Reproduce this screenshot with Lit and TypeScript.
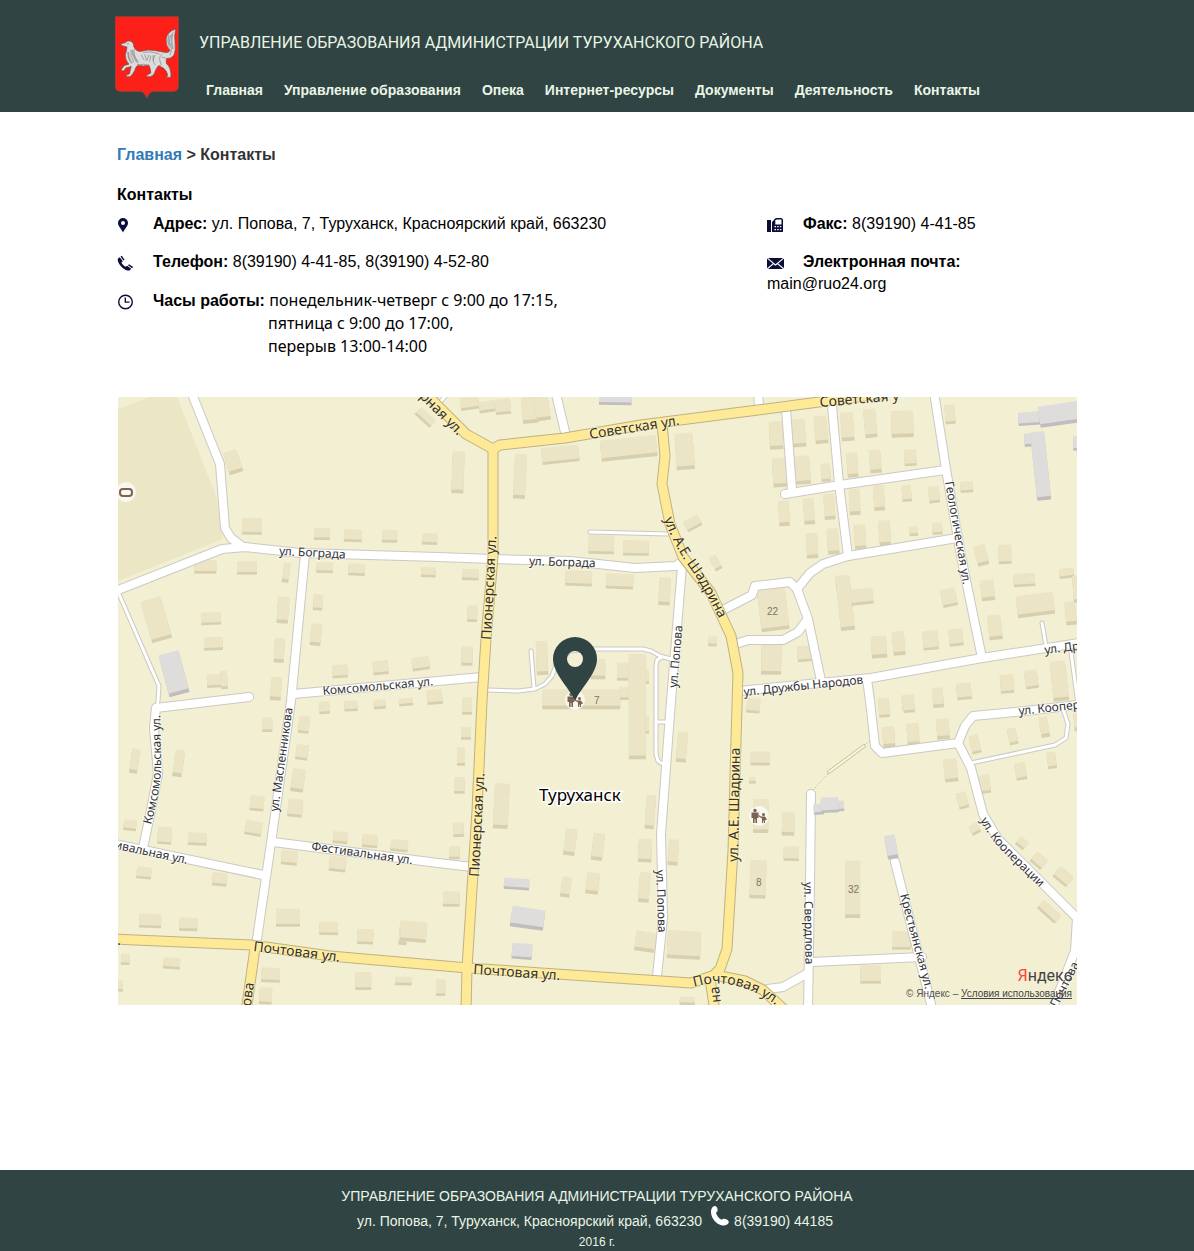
import { LitElement, html, svg, css } from "lit";
import { customElement } from "lit/decorators.js";

type Road = [kind: "main" | "street" | "lane", points: string];
type Box = [cx: number, cy: number, w: number, h: number, angle?: number];
interface Tile {
  x: number;
  y: number;
  houses: Box[];
  halls: Box[];
}

const ROADS: Road[] = [
  ["lane", "119,594 159,686 158,701 156,710"],
  ["lane", "590,532 668,534"],
  ["lane", "488,690 518,691 535,689 545,684 552,676 556,665 570,651 590,649 643,649 651,651 660,656 671,659"],
  ["lane", "531,651 534,688"],
  ["lane", "662,657 657,660 656,666 656,754 658,761 663,764"],
  ["lane", "656,722 668,722"],
  ["lane", "971,763 1055,745 1066,738 1068,724 1063,709"],
  ["lane", "1042,623 1046,646"],
  ["lane", "1071,651 1078,705"],
  ["lane", "447,394 437,406"],
  ["street", "192,394 220,464 225,528 231,538 243,547"],
  ["street", "110,593 118,590 222,549 245,547 300,553 438,557 493,559 570,561 635,568 676,566 685,559"],
  ["street", "305,554 291,701 271,843 256,946"],
  ["street", "293,694 438,681 482,677"],
  ["street", "249,697 156,708 154,728 158,774 150,815 143,848"],
  ["street", "110,843 263,875"],
  ["street", "273,842 438,863 472,867"],
  ["street", "682,566 671,701 661,834 663,918 657,976"],
  ["street", "556,394 566,436"],
  ["street", "758,390 759,408"],
  ["street", "721,611 752,595 755,586 790,582 797,589 808,619 821,681"],
  ["street", "797,589 810,573 823,564 848,556 891,549 957,538"],
  ["street", "736,644 748,640 783,640 798,632 807,620"],
  ["street", "934,392 946,469 961,556 982,658"],
  ["street", "785,494 840,485 945,470"],
  ["street", "786,409 792,490"],
  ["street", "832,406 839,484 848,556"],
  ["street", "741,691 758,689 871,678 982,658 1085,642"],
  ["street", "867,679 870,701 875,746 882,753 958,743 965,726 973,716 1025,711 1085,704"],
  ["street", "958,743 971,768 983,814 998,839 1077,918 1075,951 1050,1015"],
  ["street", "811,794 810,884 808,1012"],
  ["street", "811,962 922,957"],
  ["street", "808,973 783,987 768,989"],
  ["street", "895,862 915,941 933,1012"],
  ["main", "110,939 251,945 330,956 468,968 691,983 715,975 745,981 763,990 790,1015"],
  ["main", "255,948 246,1012"],
  ["main", "493,449 493,556 486,639 482,701 477,811 467,968 466,1012"],
  ["main", "418,385 438,406 466,434 493,449 500,445 565,438 641,425 758,410 880,394"],
  ["main", "662,424 665,456 662,484 670,524 683,557 711,593 731,636 738,673 736,740 733,851 727,949 720,969 710,979 715,1012"],
];

const TILES: Tile[] = [
  {
    x: 118, y: 396,
    houses: [
      [345,198,42,70,-18],[402,391,60,50,1],[612,414,48,36,0],[705,419,54,38,2],[815,421,45,38,1],[935,429,46,34,2],
      [262,513,66,40,0],[387,516,60,40,0],[505,530,20,60,8],[620,515,50,32,1],[716,521,50,36,2],[931,529,44,30,2],
      [115,671,62,130,-16],[495,642,34,80,4],[600,619,28,48,4],[594,716,32,66,6],[279,668,60,38,-2],[286,743,56,40,-2],
      [484,763,30,74,3],[290,855,46,40,-2],[318,852,20,54,-4],[474,878,32,70,4],[666,826,46,40,-3],[788,815,46,42,-5],
      [908,803,52,40,-8],[922,64,60,30,42],
    ],
    halls: [[168,833,62,130,-15]],
  },
  {
    x: 438, y: 396,
    houses: [
      [95,22,56,38,-8],[147,32,48,34,-8],[195,32,46,46,-5],[275,42,46,80,-5],[312,30,42,88,-8],[60,229,36,126,2],
      [246,241,36,134,3],[367,176,112,50,-6],[572,157,168,64,-6],[740,166,54,110,-4],[764,382,48,36,-28],[833,501,22,46,-28],
      [490,446,76,56,1],[594,456,77,46,1],[422,547,80,46,2],[545,556,82,46,2],[680,586,34,84,3],[97,536,50,34,2],
      [103,653,30,50,3],[87,780,34,58,1],[312,786,34,102,-2],[824,736,25,30,2],[480,820,44,60,0],[554,827,34,54,0],
      [628,842,10,44,0],[575,892,60,40,0],[430,910,234,60,0],[598,932,51,316,0],
    ],
    halls: [[532,12,98,30,1]],
  },
  {
    x: 758, y: 396,
    houses: [
      [54,118,40,84,-3],[122,111,40,84,-4],[189,101,38,84,-5],[268,92,38,86,-4],[337,82,36,86,-5],[433,84,66,80,-2],
      [576,55,30,58,-5],[66,230,44,86,-4],[134,222,44,86,-4],[203,230,28,54,-4],[283,207,32,74,-4],[352,196,34,70,-5],
      [457,185,36,50,-3],[626,273,38,34,-4],[78,352,32,76,-3],[153,346,32,78,-4],[214,332,32,78,-4],[290,318,32,78,-3],
      [363,306,32,76,-4],[446,292,28,50,-5],[528,296,32,50,-5],[162,449,34,76,-3],[225,436,34,78,-4],[306,423,34,74,-4],
      [380,411,34,76,-4],[467,406,26,28,-4],[538,398,30,36,-5],[45,638,84,132,-7],[40,782,60,108,1],[140,773,44,48,-4],
      [254,560,42,44,-4],[262,625,42,156,-6],[312,602,66,48,-6],[573,605,44,54,-12],[670,478,34,62,-14],[741,475,38,58,-2],
      [799,552,64,40,-3],[832,627,112,66,-7],[689,583,40,62,-6],[711,694,40,74,-6],[926,532,44,30,-6],[938,652,32,70,-5],
      [518,733,46,58,-5],[594,724,42,52,-6],[363,753,46,66,-4],[422,742,36,72,-5],[904,855,46,120,-6],[747,864,40,56,-5],
      [820,850,38,56,-8],[618,886,44,50,-5],[540,905,32,60,-4],[450,920,36,44,-4],[956,580,22,80,-4],
    ],
    halls: [[813,68,64,40,-4],[905,55,124,64,-8],[812,132,26,40,-5],[848,210,42,206,-6],[955,142,18,44,0]],
  },
  {
    x: 118, y: 701,
    houses: [
      [50,180,24,74,8],[182,187,28,80,8],[448,71,30,44,0],[558,71,32,52,6],[552,154,36,46,8],[540,238,38,70,8],
      [532,321,44,54,6],[417,307,42,46,5],[407,382,50,44,10],[36,373,38,32,6],[140,404,42,52,4],[238,414,56,38,2],
      [78,516,44,36,5],[305,535,44,40,6],[514,470,48,44,5],[659,489,50,46,6],[667,410,44,36,5],[756,420,46,40,5],
      [844,434,52,36,5],[97,660,66,42,2],[211,670,54,40,2],[510,650,72,54,0],[632,682,56,40,1],[742,707,48,46,2],
      [856,696,24,72,5],[887,692,78,62,5],[22,775,26,34,2],[161,787,50,34,4],[458,822,56,44,2],[443,885,38,50,3],
      [736,840,48,54,0],[856,840,50,26,1],[5,855,20,34,3],[619,20,32,38,-4],[699,15,40,32,-2],[785,10,36,28,-5],
      [864,3,42,24,-5],[950,-12,46,44,-5],[968,860,28,50,0],
    ],
    halls: [],
  },
  {
    x: 438, y: 701,
    houses: [
      [87,15,30,52,0],[84,97,30,38,0],[69,166,24,56,0],[64,253,32,50,0],[61,386,32,44,-3],[49,455,32,40,0],
      [40,594,50,46,1],[190,315,44,136,3],[397,423,34,80,8],[480,437,34,82,7],[384,558,28,62,8],[464,547,38,64,7],
      [637,333,28,102,4],[621,449,40,70,2],[706,454,30,78,4],[619,559,32,90,4],[732,138,30,92,5],[628,71,10,54,0],
      [622,722,60,60,8],[738,732,100,84,3],[748,900,46,24,1],[943,238,20,20,0],[946,14,40,44,5],
    ],
    halls: [[236,549,76,34,4],[269,652,100,62,8],[252,751,60,48,4]],
  },
  {
    x: 758, y: 701,
    houses: [
      [378,20,32,58,-4],[452,8,34,54,-4],[543,5,28,24,-5],[392,108,36,62,-4],[465,100,36,66,-4],[555,84,38,62,-4],
      [651,130,28,56,-14],[764,106,26,50,-12],[859,78,26,62,-10],[881,178,26,50,-8],[788,211,32,52,-10],[681,249,30,56,-8],
      [578,208,40,70,-6],[613,298,30,50,-16],[650,384,28,32,-28],[792,427,30,30,40],[843,479,42,38,40],[916,527,52,40,40],
      [874,632,70,34,42],[91,369,38,70,2],[100,458,46,44,1],[7,172,58,42,1],[8,345,46,102,0],[0,535,48,116,2],
      [284,565,45,172,0],[430,718,56,56,0],[338,820,62,56,0],[956,45,20,90,-5],
    ],
    halls: [[182,325,30,32,-5],[245,315,26,32,-3],[215,312,52,46,-3],[400,438,32,72,-10]],
  },
];

type Label = [text: string, x: number, y: number, angle: number, cls?: string];
const LABELS: Label[] = [
  ["ул. Бограда", 279, 555, 3],
  ["ул. Бограда", 529, 565, 2],
  ["Советская ул.", 590, 439, -9, "big"],
  ["Советская у", 820, 407, -5, "big"],
  ["Пионерская ул.", 491, 640, -87, "big"],
  ["Пионерская ул.", 479, 877, -87, "big"],
  ["ул. Попова", 677, 688, -85],
  ["ул. Попова", 656, 870, 88],
  ["ул. А.Е. Шадрина", 738, 862, -89, "big"],
  ["ул. Дружбы Народов", 744, 696, -6],
  ["Геологическая ул.", 945, 482, 80],
  ["ул. Др", 1045, 654, -7],
  ["ул. Коопер", 1019, 715, -6],
  ["ул. Свердлова", 804, 882, 89],
  ["Крестьянская ул.", 900, 895, 75],
  ["ул. Масленникова", 278, 812, -82],
  ["Комсомольская ул.", 323, 695, -5],
  ["Фестивальная ул.", 311, 850, 8],
  ["ивальная ул.", 187, 864, 12, "end"],
  ["Почтовая ул.", 253, 951, 7, "big"],
  [".", 121, 945, 2, "big end"],
  ["Почтовая ул.", 473, 974, 4, "big"],
  ["ова", 254, 983, -82, "big end"],
  ["на", 719, 986, -96, "big end"],
  ["рная ул.", 458, 436, 45, "big end"],
  ["Почтова", 1057, 1008, -63],
];

const CURVED: [id: string, d: string, text: string, cls: string][] = [
  ["c1", "M664 519 Q675 548 690 568 T732 646", "ул. А.Е. Шадрина", "big"],
  ["c2", "M694 987 Q738 974 782 1010", "Почтовая ул.", "big"],
  ["c3", "M980 820 Q989 838 1005 854 L1061 908", "ул. Кооперации", ""],
  ["c4", "M151 825 Q162 785 161 760 L160 700", "Комсомольская ул.", ""],
];

const NUMBERS: [string, number, number][] = [["22", 767, 615], ["7", 594, 704], ["8", 756, 886], ["32", 848, 893]];

const NAV = ["Главная", "Управление образования", "Опека", "Интернет-ресурсы", "Документы", "Деятельность", "Контакты"];

const roadLayer = (kind: string, part: string) =>
  ROADS.filter((r) => r[0] === kind).map((r) => svg`<polyline class="${kind} ${part}" points=${r[1]}></polyline>`);

const block = (b: Box, kind: string) => {
  const [cx, cy, w, h, a = 0] = b;
  const depth = h > 58 ? 11 : 8;
  const t = `rotate(${a} ${cx} ${cy})`;
  return svg`
    <rect class="${kind}-side" x=${cx - w / 2} y=${cy - h / 2 + depth} width=${w} height=${h - depth} transform=${t}></rect>
    <rect class=${kind} x=${cx - w / 2} y=${cy - h / 2} width=${w} height=${h - depth} transform=${t}></rect>`;
};

const family = (x: number, y: number) => svg`
  <g transform="translate(${x} ${y})">
    <circle class="poi-bg" r="10"></circle>
    <g class="poi">
      <circle cx="-4" cy="-5.500" r="1.700"></circle>
      <path d="M-7.500-3.500h7V2H-2v5h-1.600V3h-.8v4H-6V2h-1.500z"></path>
      <circle cx="4.500" cy="-1.500" r="1.500"></circle>
      <path d="M0-1l2 1.500h4l2 3-1 .8L6 3.500V7H4.900V4.800h-.8V7H3V2.500L-.5.200z"></path>
    </g>
  </g>`;

@customElement("town-map")
class TownMap extends LitElement {
  static styles = css`
    :host { display: block; position: relative; overflow: hidden; background: #f3efd3; }
    .canvas { display: block; width: 100%; height: auto; }
    .park { fill: #ebe7c4; }
    .house { fill: #ebe4c5; }
    .house-side { fill: #d6d0b1; }
    .hall { fill: #dfdddc; }
    .hall-side { fill: #bfbdbe; }
    polyline { fill: none; stroke-linejoin: round; stroke-linecap: round; }
    .edge { stroke: #cbc9c4; }
    .street.edge { stroke-width: 10px; }
    .lane.edge { stroke-width: 5px; }
    .main.edge { stroke: #bdb284; stroke-width: 11px; }
    .street.fill { stroke: #fff; stroke-width: 8px; }
    .lane.fill { stroke: #fff; stroke-width: 3px; }
    .main.fill { stroke: #feea96; stroke-width: 9px; }
    .trail-edge { stroke: #c9c7b4; stroke-width: 4px; }
    .trail { stroke: #fbf9c8; stroke-width: 2px; }
    .dots { stroke: #a9b87c; stroke-width: 1px; stroke-linecap: butt; stroke-dasharray: 1 2; }
    .label {
      font-family: "Noto Sans", "Open Sans", sans-serif; font-size: 12px; fill: #333;
      paint-order: stroke; stroke: rgba(255, 255, 255, 0.55); stroke-width: 2px;
    }
    .big { font-size: 14px; stroke: rgba(255, 245, 200, 0.55); }
    .end { text-anchor: end; }
    .town { font-size: 17px; fill: #000; stroke: #fff; stroke-width: 3px; }
    .number { font-family: "Liberation Sans", sans-serif; font-size: 10px; fill: #7a7668; }
    .poi-bg { fill: #faf7ee; }
    .poi { fill: #7a6353; }
    .stadium { fill: none; stroke: #7a6353; stroke-width: 2px; }
    .pin { fill: #2f4443; fill-rule: evenodd; }
    .credits { position: absolute; right: 5px; bottom: 5px; display: flex; flex-direction: column; align-items: flex-end; }
    .logo { font: 16px/24px Roboto, "Liberation Sans", sans-serif; color: #444; text-decoration: none; }
    .logo-first { color: #f43; }
    .terms { font: 10px/12px "Liberation Sans", Arial, sans-serif; color: #555; }
    .terms-link { color: #444; }
  `;

  render() {
    return html`
      <svg class="canvas" viewBox="118 397 959 608" role="img" aria-label="Туруханск">
        <polygon class="park" points="118,409 150,397 177,397 216,496 223,539 118,581"></polygon>
        ${TILES.map((t) => svg`<g transform="translate(${t.x} ${t.y}) scale(0.3333)">
          ${t.houses.map((b) => block(b, "house"))}
        </g>`)}
        ${roadLayer("lane", "edge")} ${roadLayer("street", "edge")}
        ${roadLayer("lane", "fill")} ${roadLayer("street", "fill")}
        ${roadLayer("main", "edge")} ${roadLayer("main", "fill")}
        ${TILES.map((t) => svg`<g transform="translate(${t.x} ${t.y}) scale(0.3333)">
          ${t.halls.map((b) => block(b, "hall"))}
        </g>`)}
        <polyline class="trail-edge" points="829,772 864,746"></polyline>
        <polyline class="trail" points="829,772 864,746"></polyline>
        <polyline class="dots" points="864,745 870,741"></polyline>
        <polyline class="dots" points="828,774 813,790"></polyline>
        ${LABELS.map(([text, x, y, a, cls = ""]) => svg`
          <text class="label ${cls}" transform="translate(${x} ${y}) rotate(${a})">${text}</text>`)}
        ${CURVED.map(([id, d, text, cls]) => svg`
          <path id=${id} d=${d} fill="none"></path>
          <text class="label ${cls}"><textPath href="#${id}">${text}</textPath></text>`)}
        <text class="label town" x="539" y="801">Туруханск</text>
        ${NUMBERS.map(([n, x, y]) => svg`<text class="number" x=${x} y=${y}>${n}</text>`)}
        ${family(575, 700)} ${family(759, 816)}
        <circle class="poi-bg" cx="126" cy="492" r="10"></circle>
        <rect class="stadium" x="120" y="489" width="12" height="7" rx="3"></rect>
        <path class="pin" d="M575 701c-4-11-22-27-22-42a22 22 0 0 1 44 0c0 15-18 31-22 42zM575 651a8 8 0 1 0 0 16 8 8 0 0 0 0-16z"></path>
      </svg>
      <div class="credits">
        <a class="logo" href="#"><span class="logo-first">Я</span>ндекс</a>
        <span class="terms">© Яндекс – <a class="terms-link" href="#">Условия использования</a></span>
      </div>`;
  }
}

@customElement("app-root")
class AppRoot extends LitElement {
  static styles = css`
    :host { display: block; font: 16px/22px "Liberation Sans", Arial, sans-serif; color: #000; background: #fff; }
    .wrap { max-width: 960px; margin: 0 auto; }
    .header { background: #2f4443; color: #ebf5e6; }
    .header-row { display: flex; gap: 20px; height: 96px; padding-top: 16px; max-width: 964px; margin: 0 auto; }
    .emblem { width: 64px; height: 83px; flex: none; }
    .shield { fill: #fd2018; stroke: #a8463f; stroke-width: 2px; }
    .fur { fill: #dcdcdc; stroke: #6d4f4c; stroke-width: 2px; stroke-linejoin: round; }
    .fur-line { fill: none; stroke: #85807e; stroke-width: 2px; stroke-linecap: round; }
    .fur-shade { fill: none; stroke: #a9a6a5; stroke-width: 5px; stroke-linecap: round; }
    .title { margin: 16px 0 25px; font: 16px/22px Roboto, sans-serif; }
    .nav { display: flex; flex-wrap: wrap; gap: 21px; padding-left: 7px; }
    .nav-link { color: #ebf5e6; font-size: 14px; line-height: 22px; font-weight: bold; text-decoration: none; }
    .main { padding: 32px 0 165px; }
    .crumbs { margin: 0 0 18px; font-weight: bold; color: #333; }
    .crumb-link { color: #337ab7; text-decoration: none; }
    .heading { margin: 0 0 7px; font-size: 16px; line-height: 22px; }
    .contacts { display: grid; grid-template-columns: 65fr 31fr; margin-bottom: 39px; }
    .item { margin: 0 0 16px; }
    .item:last-child { margin-bottom: 0; }
    .icon { width: 17px; height: 16px; margin-right: 19px; vertical-align: -4px; fill: #0d0e38; }
    .hours { line-height: 23px; }
    .hours-text { font-family: "Noto Sans", "Open Sans", sans-serif; }
    .hours-more { display: block; padding-left: 151px; }
    .map { margin-left: 1px; }
    .footer { background: #2f4443; color: #ebf5e6; padding-top: 16px; text-align: center; font-size: 14px; line-height: 20px; }
    .footer-title { margin: 0 0 5px; }
    .footer-contact { display: flex; justify-content: center; margin: 0 0 2px; padding-right: 4px; }
    .footer-phone { width: 20px; height: 22px; margin: -6px 4px 0 8px; fill: #fff; }
    .footer-year { margin: 0; font-size: 12px; line-height: 18px; }
  `;

  render() {
    return html`
      <header class="header">
        <div class="header-row">
          <svg class="emblem" viewBox="30 24 193 248" aria-hidden="true">
            <path class="shield" d="M31 25H221V234Q221 250 205 250H143Q132 254 126 270Q120 254 109 250H47Q31 250 31 234Z"></path>
            <path class="fur" d="M47 107L62 103Q66 97 75 98L82 101Q88 108 87 116Q94 130 106 130Q128 122 150 127L178 132Q192 136 196 126Q182 112 184 92Q188 70 213 62Q208 82 211 102Q214 128 207 142Q199 152 186 151Q183 158 185 166Q199 178 199 204L197 208H184L189 203Q188 190 176 180Q168 176 161 173Q154 180 151 190Q148 203 136 206H124L127 201L138 195Q137 178 132 171Q115 176 99 171Q91 176 90 186Q84 200 75 206H63L65 201L74 197Q76 184 79 175L62 180L58 188H48L51 181L58 172L72 168Q61 156 61 140Q66 125 66 116Q56 114 50 112Z"></path>
            <path class="fur-shade" d="M193 82Q187 98 194 112M203 80Q198 96 204 120M82 127Q86 151 99 163M70 134Q70 154 81 164"></path>
            <path class="fur-line" d="M206 71Q189 91 197 111Q205 126 196 140M88 122Q84 142 98 158M78 126Q74 144 87 162M69 132Q68 147 76 159M110 141L117 155M120 140L125 157M132 141L127 155M138 144L134 160M145 142L145 157M116 132Q138 127 163 137M151 141Q139 158 151 170M172 137Q158 148 169 168M185 151L173 147M98 170Q117 166 132 171M161 173L169 171M67 107H71"></path>
          </svg>
          <div>
            <p class="title">УПРАВЛЕНИЕ ОБРАЗОВАНИЯ АДМИНИСТРАЦИИ ТУРУХАНСКОГО РАЙОНА</p>
            <nav class="nav">${NAV.map((n) => html`<a class="nav-link" href="#">${n}</a>`)}</nav>
          </div>
        </div>
      </header>
      <main class="main wrap">
        <p class="crumbs"><a class="crumb-link" href="#">Главная</a> &gt; Контакты</p>
        <h1 class="heading">Контакты</h1>
        <section class="contacts">
          <div>
            <p class="item"><svg class="icon" viewBox="0 0 17 16"><path fill-rule="evenodd" d="M6 1a5 5 0 0 1 5 5c0 3-3.500 6-5 9.500C4.500 12 1 9 1 6a5 5 0 0 1 5-5zm0 3a2 2 0 1 0 0 4 2 2 0 0 0 0-4z"></path></svg><b>Адрес:</b> ул. Попова, 7, Туруханск, Красноярский край, 663230</p>
            <p class="item"><svg class="icon" viewBox="0 0 17 16"><path d="M1 3.500l1.800-1.300 3 4-1.300 1.300c.8 2 2.400 3.500 4.200 4.300l1.500-1.100 4 3-1.400 1.500c-1.200.8-4.300.2-7.300-2.500C2 9.500 0 5.500 1 3.500zM3.500 1.500l1.300-.8 2.800 4-1.200.9zM11 10.300l1-1.100 4.200 2.900-1.100 1.200z"></path></svg><b>Телефон:</b> 8(39190) 4-41-85, 8(39190) 4-52-80</p>
            <p class="item hours"><svg class="icon" viewBox="0 0 17 16"><path fill-rule="evenodd" d="M8.500.5a7.500 7.500 0 1 1 0 15 7.500 7.500 0 0 1 0-15zm0 1.400a6.100 6.100 0 1 0 0 12.200 6.100 6.100 0 0 0 0-12.200zM7.600 3.500H9v4h3.500v1.300H7.600z"></path></svg><b>Часы работы:</b> <span class="hours-text">понедельник-четверг с 9:00 до 17:15,<span class="hours-more">пятница с 9:00 до 17:00,</span><span class="hours-more">перерыв 13:00-14:00</span></span></p>
          </div>
          <div>
            <p class="item"><svg class="icon" viewBox="0 0 17 16"><path fill-rule="evenodd" d="M0 3h4v12H0zM5 5l2-2V2.500L9 1h5.500L16 2.500V15H5zM8.300 3v4.500h6.200V2.500H9.300V3zM7.500 9v1.300H9V9zm2.700 0v1.300h1.500V9zm2.700 0v1.300h1.400V9zM7.500 12v1.300H9V12zm2.700 0v1.300h1.500V12zm2.700 0v1.300h1.400V12z"></path></svg><b>Факс:</b> 8(39190) 4-41-85</p>
            <p class="item"><svg class="icon" viewBox="0 0 17 16"><path d="M1 3h15L8.500 9.300zM0 3.500l5.800 5L0 13.200zM17 3.500l-5.800 5 5.800 4.700zM6.500 9.200l2 1.600 2-1.600L16 14H1z"></path></svg><b>Электронная почта:</b> main@ruo24.org</p>
          </div>
        </section>
        <town-map class="map"></town-map>
      </main>
      <footer class="footer">
        <p class="footer-title">УПРАВЛЕНИЕ ОБРАЗОВАНИЯ АДМИНИСТРАЦИИ ТУРУХАНСКОГО РАЙОНА</p>
        <p class="footer-contact">
          <span>ул. Попова, 7, Туруханск, Красноярский край, 663230</span>
          <svg class="footer-phone" viewBox="0 0 20 22"><path d="M4.500 1C6 .8 7.500 2.500 7.600 4.500c.1 1.800-.5 2.300-1.600 3.200.6 2.900 2.700 5.600 5.600 7 1.200-1 2-1.300 3.800-.6 2 .7 3.600 1.800 3.400 3.200-.3 2-3.300 3.800-6.500 3.200C6 19.300 1 13 1 7c0-3 1.500-5.700 3.500-6z"></path></svg>
          <span>8(39190) 44185</span>
        </p>
        <p class="footer-year">2016 г.</p>
      </footer>`;
  }
}
